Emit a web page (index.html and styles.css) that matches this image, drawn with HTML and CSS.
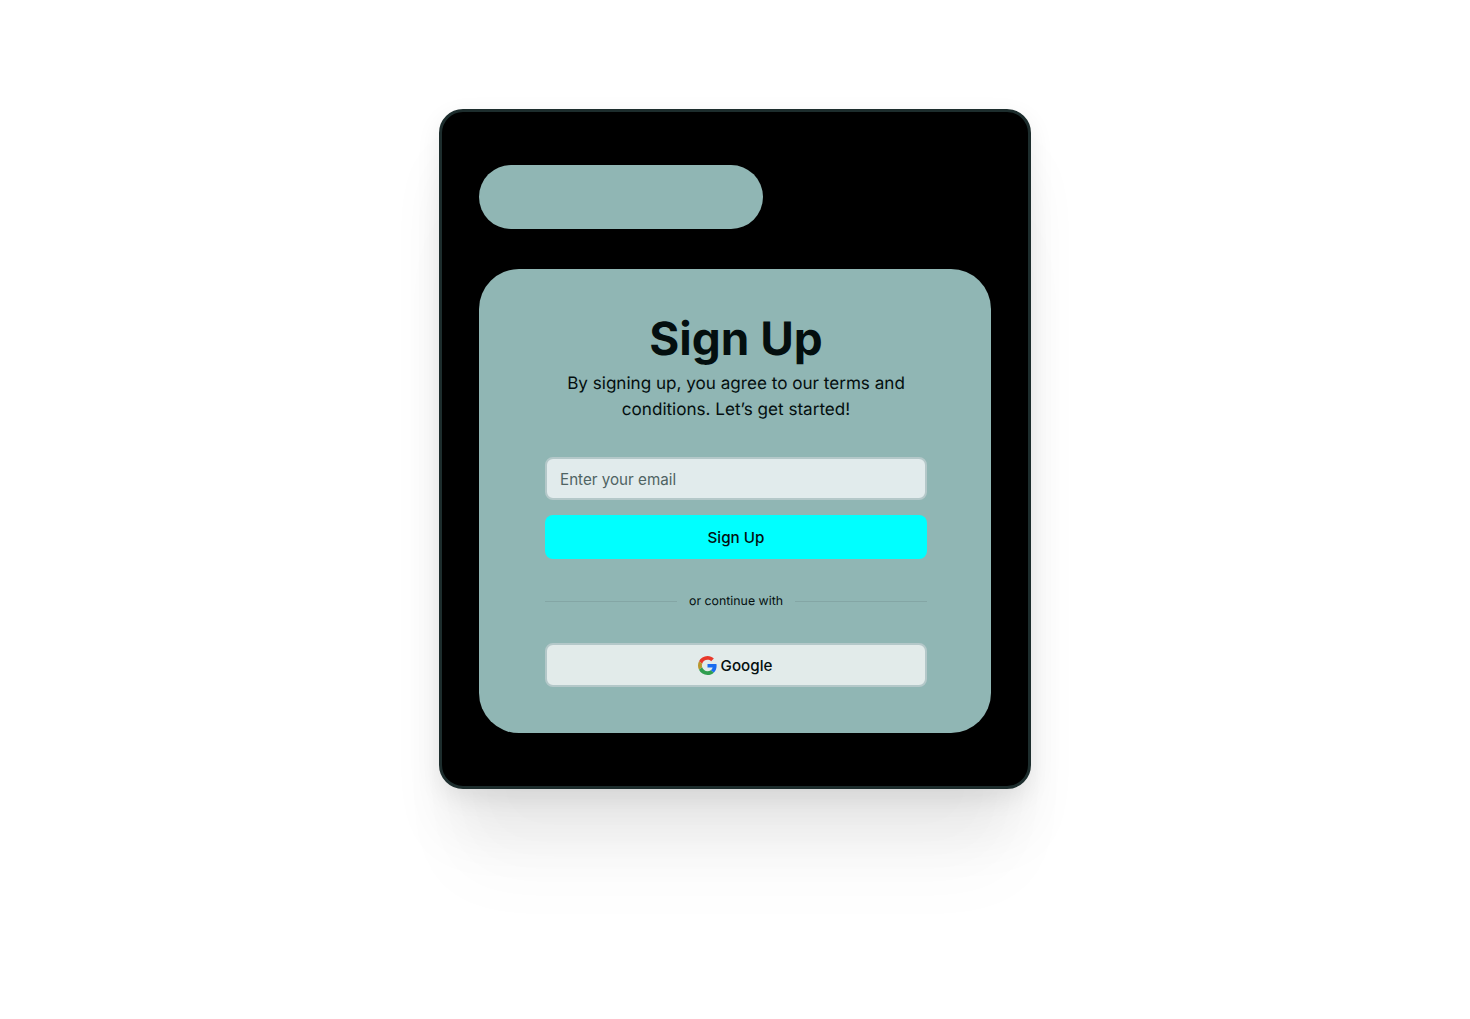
FILE: index.html
```html
<!DOCTYPE html>
<html>
<head>
  <meta charset="UTF-8">
  <meta name="viewport" content="width=device-width, initial-scale=1.0">
  <title>Sign Up</title>
  <link rel="stylesheet" href="styles.css">
</head>
<body>
  <div class="card">
    <div class="pill"></div>

    <div class="panel">
      <h1>Sign Up</h1>
      <p class="intro">By signing up, you agree to our terms and conditions. Let’s get started!</p>

      <form class="form">
        <input type="email" class="email" placeholder="Enter your email">
        <button type="button" class="submit">Sign Up</button>

        <div class="divider"><span>or continue with</span></div>

        <button type="button" class="google">
          <svg width="19" height="19" viewBox="0 0 48 48">
            <path fill="#E8382A" d="M24 9.5c3.54 0 6.71 1.22 9.21 3.6l6.85-6.85C35.9 2.38 30.47 0 24 0 14.62 0 6.51 5.38 2.56 13.22l7.98 6.19C12.43 13.72 17.74 9.5 24 9.5z"/>
            <path fill="#1A6CF0" d="M46.98 24.55c0-1.57-.15-3.09-.38-4.55H24v9.02h12.94c-.58 2.96-2.26 5.48-4.78 7.18l7.73 6c4.51-4.18 7.09-10.36 7.09-17.65z"/>
            <path fill="#B8962E" d="M10.53 28.59c-.48-1.45-.76-2.99-.76-4.59s.27-3.14.76-4.59l-7.98-6.19C.92 16.46 0 20.12 0 24c0 3.88.92 7.54 2.56 10.78l7.97-6.19z"/>
            <path fill="#2F9E4F" d="M24 48c6.48 0 11.93-2.13 15.89-5.81l-7.73-6c-2.15 1.45-4.92 2.3-8.16 2.3-6.26 0-11.57-4.22-13.47-9.91l-7.98 6.19C6.51 42.62 14.62 48 24 48z"/>
          </svg>
          <span>Google</span>
        </button>
      </form>
    </div>
  </div>
</body>
</html>
```

FILE: styles.css
```css
* {
  box-sizing: border-box;
}
body {
  margin: 0;
  padding-top: 109px;
  min-height: 1019px;
  background-color: #fff;
  font-family: Inter, "Liberation Sans", sans-serif;
  color: #040f0f;
  text-rendering: geometricPrecision;
}
.card {
  width: 592px;
  height: 680px;
  margin: 0 auto;
  padding: 53px 37px;
  background-color: #000;
  border: 3px solid #1d2d2d;
  border-radius: 24px;
  box-shadow: 0 8px 24px rgba(0, 0, 0, 0.08), 0 50px 60px -10px rgba(0, 0, 0, 0.08), 0 100px 80px -20px rgba(0, 0, 0, 0.03);
}
.pill {
  width: 284px;
  height: 64px;
  margin-bottom: 40px;
  background-color: #90b6b4;
  border-radius: 32px;
}
.panel {
  height: 464px;
  padding: 45px 64px 0 66px;
  background-color: #90b6b4;
  border-radius: 40px;
  text-align: center;
}
h1 {
  margin: 0;
  font-size: 45.9px;
  line-height: 52px;
  font-weight: 700;
}
.intro {
  margin: 5px auto 0;
  width: 360px;
  font-size: 17.1px;
  line-height: 26px;
}
.form {
  display: flex;
  flex-direction: column;
  margin-top: 34px;
}
.email {
  height: 43px;
  padding: 2px 13px 0;
  background-color: #e1ebec;
  border: 2px solid #b4c8c9;
  border-radius: 8px;
  font-family: inherit;
  font-size: 15.2px;
  color: #040f0f;
}
.email::placeholder {
  color: #4f6363;
  opacity: 1;
}
.submit {
  height: 44px;
  margin-top: 15px;
  padding-top: 1px;
  background-color: #0ff;
  border: none;
  border-radius: 8px;
  font-family: inherit;
  font-size: 15.2px;
  font-weight: 450;
  color: #040f0f;
}
.divider {
  display: flex;
  align-items: center;
  gap: 12px;
  margin: 32px 0;
  height: 20px;
  font-size: 12.35px;
  line-height: 20px;
}
.divider::before,
.divider::after {
  content: "";
  flex: 1;
  height: 1px;
  background-color: #84a6a5;
}
.google {
  display: flex;
  align-items: center;
  justify-content: center;
  gap: 4px;
  height: 44px;
  padding-right: 8px;
  background-color: #e2ebea;
  border: 2px solid #b4c8c9;
  border-radius: 8px;
  font-family: inherit;
  font-size: 15.2px;
  font-weight: 450;
  color: #040f0f;
}
```
